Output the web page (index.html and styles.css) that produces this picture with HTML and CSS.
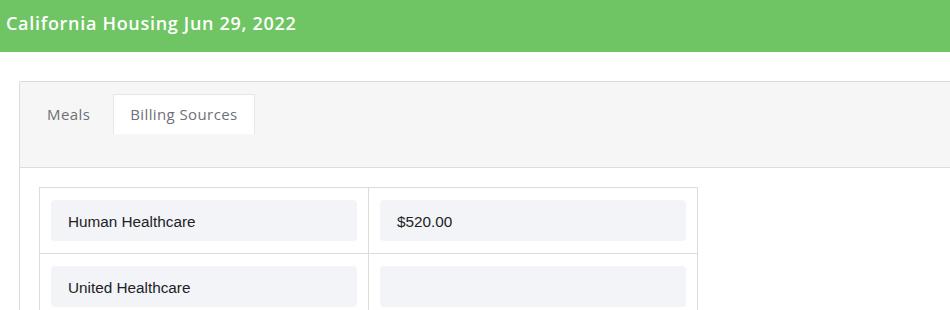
FILE: index.html
```html
<!DOCTYPE html>
<html lang="en">
<head>
  <meta charset="UTF-8" />
  <title>California Housing</title>
  <meta name="viewport" content="width=device-width, initial-scale=1.0" />
  <link rel="stylesheet" href="styles.css">
</head>
<body>

  <!-- Barra do topo -->
  <header class="topbar">California Housing Jun 29, 2022</header>

  <div class="page">
    <div class="card">
      <div class="card-header">
        <ul class="tabs">
          <li class="tab">Meals</li>
          <li class="tab active">Billing Sources</li>
        </ul>
      </div>

      <div class="card-body">
        <table class="billing">
          <tr>
            <td><div class="field">Human Healthcare</div></td>
            <td><div class="field">$520.00</div></td>
          </tr>
          <tr>
            <td><div class="field">United Healthcare</div></td>
            <td><div class="field"></div></td>
          </tr>
        </table>
      </div>
    </div>
  </div>

</body>
</html>
```

FILE: styles.css
```css
* { box-sizing: border-box; margin: 0; padding: 0; }

body {
  font-family: 'Open Sans', sans-serif;
  background: #fff;
  color: #222;
  overflow: hidden;
}

.topbar {
  height: 52px;
  background: #6fc563;
  color: #fff;
  font-size: 18px;
  font-weight: 600;
  letter-spacing: 0.7px;
  line-height: 46px;
  padding-left: 6px;
}

.page {
  padding: 29px 0 0 19px;
}

.card {
  border: 1px solid #dcdcdc;
  border-right: none;
  border-radius: 2px 0 0 0;
  width: 940px;
}

.card-header {
  background: #f6f6f6;
  border-bottom: 1px solid #dcdcdc;
  padding: 12px 0 33px 10px;
}

.tabs {
  list-style: none;
  display: flex;
  gap: 6px;
}

.tab {
  height: 40px;
  line-height: 39px;
  padding: 0 16px;
  font-size: 15px;
  letter-spacing: 0.4px;
  color: #6f6f78;
  border: 1px solid transparent;
}

.tab.active {
  background: #fff;
  border-color: #e6e6e6;
  border-bottom: none;
}

.card-body {
  background: #fff;
  padding: 19px 0 0 19px;
}

.billing {
  border-collapse: collapse;
  font-family: 'Liberation Sans', Arial, sans-serif;
  font-size: 15.3px;
}

.billing td {
  width: 329px;
  border: 1px solid #dcdcdc;
  padding: 12px 11px;
}

.field {
  height: 41px;
  line-height: 41px;
  padding-top: 1px;
  background: #f3f4f8;
  border-radius: 4px;
  padding-left: 17px;
  color: #222;
}
```
